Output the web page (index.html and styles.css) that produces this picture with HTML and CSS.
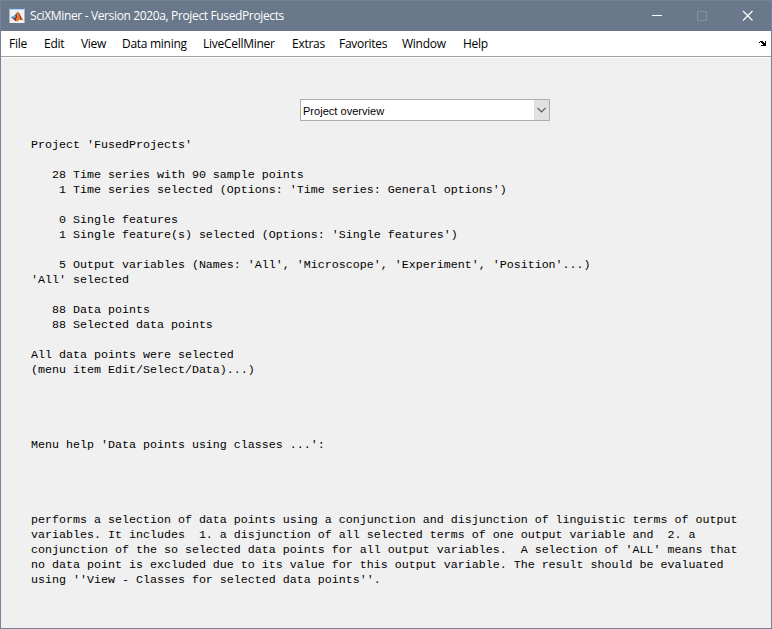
FILE: index.html
```html
<!DOCTYPE html>
<html lang="en">
<head>
<meta charset="utf-8">
<title>SciXMiner</title>
<link rel="stylesheet" href="styles.css">
</head>
<body>
<div class="window">
  <header class="titlebar">
    <svg class="logo" width="16" height="16" viewBox="0 0 16 16">
      <path fill="#f1f1f1" d="M.5 0h15v15H.5z"/>
      <path fill="#4f83b5" d="M.5 0h15v1.300H.5z"/>
      <path fill="#2f79ad" d="M2 9.300 5 8 8.400 4 7.400 9 4.600 11.500z"/>
      <path fill="#67b9c4" d="M4 9 6 7.400l1 1-2 2z"/>
      <path fill="#8f241b" d="M8.600 3.500 7 8.800l-2.400 2.500 2.200 2L9 12z"/>
      <path fill="#ed7d22" d="M8.600 3.200c1.400 1.200 3 6.800 5.600 9.300-2.200-1.500-3.400-1.300-4.400 0L8 13.600l-1.300-2.300L8 9z"/>
      <path fill="#a32a1d" d="M9.400 3.700c1.600 2 2.600 6 4.800 8.800-1.200-.8-2.100-1.200-3-.9C10.800 9 10.200 6.300 9.400 3.700z"/>
    </svg>
    <span class="title">SciXMiner - Version 2020a, Project FusedProjects</span>
    <svg class="controls" width="104" height="12" viewBox="0 0 104 12" fill="none">
      <path d="M0 5.500h10" stroke="#fff"/>
      <path d="M45.500 1.500h9v9h-9z" stroke="#8493a2"/>
      <path d="m91 1 9.500 9.500m0-9.500L91 10.500" stroke="#fff" stroke-width="1.2"/>
    </svg>
  </header>
  <nav class="menubar">
    <span>File</span><span>Edit</span><span>View</span><span>Data mining</span><span>LiveCellMiner</span><span>Extras</span><span>Favorites</span><span>Window</span><span>Help</span>
    <svg class="dock" width="8" height="6" viewBox="0 0 8 6" shape-rendering="crispEdges">
      <path d="M1 0h3v1h1v1h1V0h1v5H2V4h2V3H3V2H2V1H1zM0 1h1v1H0z"/>
    </svg>
  </nav>
  <main class="content">
    <div class="select"><span>Project overview</span>
      <div class="arrow"><svg width="9" height="6" viewBox="0 0 9 6"><path d="m.5.8 4 4 4-4" fill="none" stroke="#555" stroke-width="1.2"/></svg></div>
    </div>
<pre class="report">Project 'FusedProjects'

   28 Time series with 90 sample points
    1 Time series selected (Options: 'Time series: General options')

    0 Single features
    1 Single feature(s) selected (Options: 'Single features')

    5 Output variables (Names: 'All', 'Microscope', 'Experiment', 'Position'...)
'All' selected

   88 Data points
   88 Selected data points

All data points were selected
(menu item Edit/Select/Data)...)




Menu help 'Data points using classes ...':




performs a selection of data points using a conjunction and disjunction of linguistic terms of output
variables. It includes  1. a disjunction of all selected terms of one output variable and  2. a
conjunction of the so selected data points for all output variables.  A selection of 'ALL' means that
no data point is excluded due to its value for this output variable. The result should be evaluated
using ''View - Classes for selected data points''.</pre>
  </main>
</div>
</body>
</html>
```
FILE: styles.css
```css
* { box-sizing: border-box; }
body { margin: 0; }
.window {
  width: 772px;
  height: 629px;
  display: flex;
  flex-direction: column;
  border: 1px solid #748397;
  background: #f0f0f0;
  overflow: hidden;
}
.titlebar {
  height: 30px;
  flex: none;
  display: flex;
  align-items: center;
  padding-left: 8px;
  background: #69788a;
  color: #fff;
  font: 12px/16px "Open Sans", sans-serif;
}
.title { margin-left: 5px; letter-spacing: -0.36px; white-space: nowrap; }
.controls { margin-left: auto; margin-right: 15px; }
.menubar {
  height: 26px;
  flex: none;
  display: grid;
  grid-template-columns: 35px 37px 41px 81px 89px 47px 63px 61px 1fr auto;
  align-items: center;
  padding: 1px 4px 0 8px;
  background: #fff;
  border-bottom: 1px solid #a0a0a0;
  color: #000;
  font: 12px/16px "Open Sans", sans-serif;
  letter-spacing: -0.28px;
  white-space: nowrap;
}
.content { padding: 41px 0 0 30px; border-top: 1px solid #fff; }
.select {
  width: 250px;
  height: 22px;
  margin-left: 269px;
  display: flex;
  justify-content: space-between;
  border: 1px solid #abadb3;
  background: #fff;
  padding-left: 2px;
  color: #000;
  font: 11px/23px "Liberation Sans", sans-serif;
  letter-spacing: 0.03px;
}
.arrow {
  width: 15px;
  display: flex;
  align-items: center;
  justify-content: center;
  background: #e1e1e1;
}
.report {
  margin: 17px 0 0;
  color: #000;
  font: 11.665px/15px "Liberation Mono", monospace;
}
```
